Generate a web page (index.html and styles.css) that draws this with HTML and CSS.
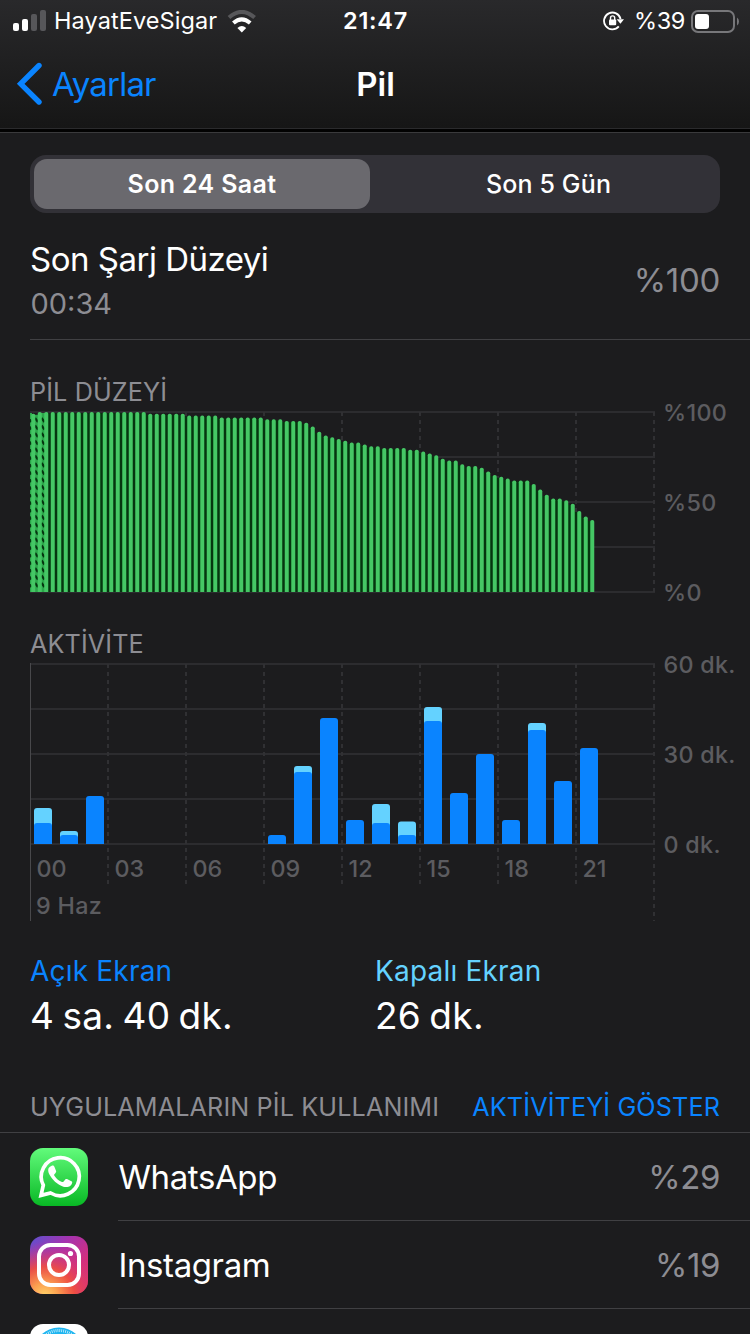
FILE: index.html
```html
<!DOCTYPE html>
<html lang="tr">
<head>
<meta charset="utf-8">
<title>Pil</title>
<link rel="stylesheet" href="styles.css">
</head>
<body>
<div class="screen">
  <header class="top">
    <div class="status">
      <div class="status-left">
        <svg class="signal" width="34" height="22" viewBox="0 0 34 22">
          <rect x="0" y="13" width="6" height="8" rx="2" fill="#fff"/>
          <rect x="9" y="9" width="6" height="12" rx="2" fill="#fff"/>
          <rect x="18" y="4" width="6" height="17" rx="2" fill="#57575a"/>
          <rect x="27" y="0" width="6" height="21" rx="2" fill="#57575a"/>
        </svg>
        <span class="carrier">HayatEveSigar</span>
        <svg class="wifi" width="30" height="23" viewBox="0 0 30 23" fill="none">
          <path d="M2 7.6Q14.7 -3.8 27.6 7.6" stroke="#57575a" stroke-width="4"/>
          <path d="M6.4 13Q14.7 5.6 23.2 13" stroke="#fff" stroke-width="4"/>
          <path d="M14.8 22.4L10.4 17.9Q14.8 13.9 19.2 17.9Z" fill="#fff"/>
        </svg>
      </div>
      <span class="clock">21:47</span>
      <div class="status-right">
        <svg class="lock" width="22" height="20" viewBox="0 0 22 20" fill="none">
          <path d="M15.8 15.4A8.4 8.4 0 1 1 17.6 8" stroke="#fff" stroke-width="1.8"/>
          <path d="M13.6 8.2H21L17.4 12.8Z" fill="#fff"/>
          <rect x="6" y="8.4" width="7.2" height="5.8" rx="1" fill="#fff"/>
          <path d="M7.5 9V7a2.1 2.1 0 0 1 4.2 0V9" stroke="#fff" stroke-width="1.4"/>
        </svg>
        <span class="percent">%39</span>
        <svg class="battery" width="48" height="23" viewBox="0 0 48 23">
          <rect x="1" y="1" width="42" height="21" rx="6" fill="none" stroke="#77777a" stroke-width="2"/>
          <rect x="4" y="4" width="14" height="15" rx="3" fill="#fff"/>
          <path d="M46 7.5Q48 9 48 11.5Q48 14 46 15.5Z" fill="#77777a"/>
        </svg>
      </div>
    </div>
    <nav class="nav">
      <div class="back">
        <svg width="26" height="44" viewBox="0 0 26 44"><path d="M23 3.5L4.700 21.8L23 40" fill="none" stroke="#0a84ff" stroke-width="5.4" stroke-linecap="round"/></svg>
        <span class="back-label">Ayarlar</span>
      </div>
      <h1 class="title">Pil</h1>
    </nav>
  </header>

  <main class="content">
    <div class="segments">
      <div class="segment segment-on"><span>Son 24 Saat</span></div>
      <div class="segment segment-off"><span>Son 5 Gün</span></div>
    </div>

    <section class="charge">
      <div>
        <div class="charge-title">Son Şarj Düzeyi</div>
        <div class="charge-time">00:34</div>
      </div>
      <div class="charge-value">%100</div>
    </section>

    <h2 class="heading level-heading">PİL DÜZEYİ</h2>
    <div class="chart">
      <svg id="level" class="level-plot" width="630" height="184" viewBox="0 0 630 184"></svg>
      <div class="scale"><span>%100</span><span>%50</span><span>%0</span></div>
    </div>

    <h2 class="heading activity-heading">AKTİVİTE</h2>
    <div class="chart chart-activity">
      <div>
        <svg id="activity" class="activity-plot" width="630" height="260" viewBox="0 0 630 260"></svg>
        <div class="hours"><span>00</span><span>03</span><span>06</span><span>09</span><span>12</span><span>15</span><span>18</span><span>21</span></div>
        <div class="date">9 Haz</div>
      </div>
      <div class="scale"><span>60 dk.</span><span>30 dk.</span><span>0 dk.</span></div>
    </div>

    <section class="totals">
      <div><div class="total-label on">Açık Ekran</div><div class="total-value">4 sa. 40 dk.</div></div>
      <div><div class="total-label off">Kapalı Ekran</div><div class="total-value">26 dk.</div></div>
    </section>

    <div class="apps-head">
      <h2 class="heading">UYGULAMALARIN PİL KULLANIMI</h2>
      <span class="heading show">AKTİVİTEYİ GÖSTER</span>
    </div>

    <div class="app">
      <svg class="app-icon" width="58" height="58" viewBox="0 0 58 58">
        <defs><linearGradient id="wa" x2="0" y2="1"><stop stop-color="#62fb7b"/><stop offset="1" stop-color="#08b824"/></linearGradient></defs>
        <rect width="58" height="58" rx="13" fill="url(#wa)"/>
        <path d="M11 47.400L13.3 37.2A19 19 0 1 1 20.6 45Z" fill="none" stroke="#fff" stroke-width="3.7" stroke-linejoin="miter"/>
        <path d="M22.2 19.2c1.300-.9 2.500-.3 3 .8l1.700 4.100c.3.900-.2 1.600-1.700 3.300-.5.600-.3 1 .2 1.800 1.900 3 4.400 4.800 7.400 6 .7.200 1.100.1 1.600-.5l1.700-2.100c.5-.6 1.100-.6 1.700-.3l4.400 2.100c.8.400.9.700.8 1.300-.4 3.400-3.600 4.800-6.200 4.600-3-.2-8.500-2.500-12.600-7.200-4.300-4.900-5.600-8-5.100-10.700.3-1.600 1.700-2.600 3.100-3.200z" transform="translate(-.8 -1.200)" fill="#fff"/>
      </svg>
      <div class="app-row"><span class="app-name">WhatsApp</span><span class="app-value">%29</span></div>
    </div>
    <div class="app">
      <svg class="app-icon" width="58" height="58" viewBox="0 0 58 58">
        <defs>
          <linearGradient id="ig1" x1="0" y1="0" x2="1" y2="1"><stop stop-color="#5b52d0"/><stop offset=".35" stop-color="#a533b0"/><stop offset=".7" stop-color="#d52e7a"/><stop offset="1" stop-color="#e23a63"/></linearGradient>
          <radialGradient id="ig2" cx=".25" cy="1.05" r=".95"><stop stop-color="#ffd76b"/><stop offset=".25" stop-color="#fca050"/><stop offset=".55" stop-color="#f0503e" stop-opacity=".9"/><stop offset="1" stop-color="#d02f8c" stop-opacity="0"/></radialGradient>
        </defs>
        <rect width="58" height="58" rx="13" fill="url(#ig1)"/>
        <rect width="58" height="58" rx="13" fill="url(#ig2)"/>
        <g fill="none" stroke="#fff" stroke-width="4"><rect x="9" y="9" width="40" height="40" rx="11.500"/><circle cx="29" cy="29" r="10"/></g>
        <circle cx="40.500" cy="17.500" r="2.600" fill="#fff"/>
      </svg>
      <div class="app-row"><span class="app-name">Instagram</span><span class="app-value">%19</span></div>
    </div>
    <div class="app">
      <svg class="app-icon" width="58" height="58" viewBox="0 0 58 58">
        <rect width="58" height="58" rx="13" fill="#fff"/>
        <circle cx="29" cy="29" r="25.500" fill="#1eb5f0"/>
        <circle cx="29" cy="29" r="22.500" fill="none" stroke="#e3f6ff" stroke-width="3" stroke-dasharray=".7 1.260"/>
      </svg>
      <div class="app-row"></div>
    </div>
  </main>
</div>
<script src="charts.js"></script>
</body>
</html>
```

FILE: styles.css
```css
* { box-sizing: border-box; margin: 0; padding: 0; }
body { background: #1c1c1e; color: #fff; font-family: Inter, "Liberation Sans", sans-serif; }
.screen { width: 750px; height: 1334px; overflow: hidden; background: #1c1c1e; }
svg { display: block; flex: none; }
span, .charge-title, .charge-time, .charge-value, .total-label, .total-value { white-space: nowrap; }

.top { height: 133px; background: linear-gradient(#29292b, #161616 128px); border-bottom: 1px solid #3a3a3c; box-shadow: inset 0 -3px 0 #020202, inset 0 -4px 0 #2b2b2d; }
.status { display: grid; grid-template-columns: 1fr auto 1fr; height: 40px; align-items: center; padding: 1px 12px 0 13px; font-size: 23.500px; line-height: 40px; }
.status-left, .status-right { display: flex; align-items: center; }
.status-right { justify-content: flex-end; }
.carrier { margin-left: 7px; letter-spacing: .08px; }
.wifi { margin-left: 10px; }
.clock { font-weight: 600; letter-spacing: .7px; }
.lock { margin-right: 9px; }
.percent { letter-spacing: -.4px; }
.battery { margin: 0 -1px 0 6px; }
.nav { display: grid; grid-template-columns: 1fr auto 1fr; align-items: center; height: 88px; padding: 0 15px 0 16px; font-size: 33px; }
.back { display: flex; align-items: center; gap: 10px; color: #0a84ff; letter-spacing: -.8px; }
.title { font-size: 33px; font-weight: 600; }

.content { padding-top: 22px; }
.segments { display: flex; height: 58px; margin: 0 30px; padding: 4px; border-radius: 16px; background: #323137; }
.segment { flex: 1; display: flex; align-items: center; justify-content: center; border-radius: 13px; font-size: 25px; font-weight: 500; }
.segment-on { flex: 0 0 336px; background: #6a696e; font-weight: 600; letter-spacing: .35px; }
.segment-off { padding-left: 11px; letter-spacing: .15px; }

.charge { display: flex; justify-content: space-between; align-items: center; height: 127px; margin-left: 30px; padding: 10px 30px 0 0; border-bottom: 1px solid #404043; }
.charge-title { font-size: 33px; line-height: 46px; letter-spacing: -.5px; }
.charge-time { padding-left: .5px; font-size: 29px; line-height: 44px; color: #8d8d93; }
.charge-value { margin-top: -2px; font-size: 33px; letter-spacing: -.3px; color: #8d8d93; }

.heading { font-size: 25.200px; font-weight: 400; line-height: 32px; letter-spacing: .12px; color: #8d8d93; }
.level-heading { margin: 36px 0 0 30px; }
.activity-heading { margin: 29px 0 0 30px; }
.chart { display: flex; height: 188px; margin: 3px 0 0 30px; }
.level-plot { margin-bottom: -100px; }
.scale { display: flex; flex-direction: column; gap: 60px; margin: -13px 0 0 3px; font-size: 23.300px; font-weight: 500; line-height: 30px; letter-spacing: .3px; color: #5c5c60; }
.chart-activity { height: 262px; }
.activity-plot { margin-bottom: -69px; }
.hours { display: grid; grid-template-columns: repeat(8, 78px); padding-left: 6.500px; font-size: 23.300px; font-weight: 500; line-height: 30px; color: #5c5c60; }
.date { padding: 7px 0 0 6px; font-size: 23.300px; font-weight: 500; line-height: 30px; letter-spacing: .3px; color: #5c5c60; }

.totals { display: grid; grid-template-columns: 345px 1fr; margin: 27px 0 0 30px; }
.total-label { font-size: 28px; line-height: 38px; letter-spacing: .2px; }
.on { color: #0a84ff; }
.off { color: #64d2ff; }
.total-value { font-size: 37px; line-height: 52px; letter-spacing: .3px; word-spacing: -2.500px; }

.apps-head { display: flex; justify-content: space-between; margin-top: 49px; padding: 0 30px 9px; border-bottom: 1px solid #404043; }
.show { color: #0a84ff; }
.app { display: flex; height: 88px; padding-left: 30px; }
.app-icon { margin-top: 15px; }
.app-row { display: flex; flex: 1; justify-content: space-between; align-items: center; margin-left: 30px; padding-right: 30px; border-bottom: 1px solid #404043; font-size: 33px; letter-spacing: -.4px; }
.app-name { padding-left: .5px; }
.app-value { color: #8d8d93; }

.grid-line { stroke: #2c2c2f; stroke-width: 2; }
.grid-dash { stroke: #303033; stroke-width: 2; stroke-dasharray: 4 4; }
.day-line { stroke: #48484b; stroke-width: 1; }
.bar-level { fill: #45c765; }
.gap-level { fill: #05350f; }
.gap-charging { fill: #2ba64a; }
.hatch { stroke: #05350f; stroke-width: 2.200; }
.bar-on { fill: #0a84ff; }
.bar-off { fill: #64d2ff; }
```

FILE: charts.js
```js
const levels = [
  99,100,100,100,100,100,100,100,100,100,100,100,100,100,100,100,100,100,
  99,99,99,99,99,99,98,98,98,98,98,97,97,97,97,97,97,97,96,96,96,95,95,95,
  94,92,89,87,86,85,84,83,83,82,81,81,80,80,80,80,79,79,78,77,76,74,73,73,
  71,70,70,69,67,65,64,63,62,62,62,60,57,54,52,52,51,49,45,42,40
];

// [hour, screen-on height, total height]
const activity = [
  [0,21,36],[1,9,13],[2,48,48],[9,9,9],[10,72,78],[11,126,126],[12,24,24],
  [13,21,40],[14,9,22.500],[15,123,137],[16,51,51],[17,90,90],[18,24,24],
  [19,114,121],[20,63,63],[21,96,96]
];

function grid(dashEnd, lastEnd) {
  let s = "";
  for (let i = 0; i <= 4; i++) s += `<path class="grid-line" d="M0 ${1 + i * 45}H625"/>`;
  for (let i = 1; i <= 8; i++) s += `<path class="grid-dash" d="M${i * 78} 1V${i === 8 ? lastEnd : dashEnd}"/>`;
  return s;
}

function topRound(cls, x, w, h, r) {
  const y = 181 - h;
  return `<path class="${cls}" d="M${x} 181V${y + r}q0 ${-r} ${r} ${-r}h${w - 2 * r}q${r} 0 ${r} ${r}V181Z"/>`;
}

let level = grid(181, 181);
level += '<rect class="gap-charging" x="0" y="2" width="2" height="179"/>';
levels.forEach((v, i) => {
  const x = 1.25 + i * 6.5;
  if (i < levels.length - 1) {
    const h = Math.min(v, levels[i + 1]) * 1.8 - 1;
    const cls = i < 2 ? "gap-charging" : "gap-level";
    level += `<rect class="${cls}" x="${x + 3}" y="${181 - h}" width="4.500" height="${h}"/>`;
  }
});
// Diagonal stripes mark the time on the charger.
for (const x of [-1.5, 5, 11.5]) {
  for (let y = 9; y < 179; y += 7.5) level += `<path class="hatch" d="M${x} ${y - 2}l3 4"/>`;
}
levels.forEach((v, i) => { level += topRound("bar-level", 1.25 + i * 6.5, 4, v * 1.8, 1.8); });
document.getElementById("level").innerHTML = level;

let act = grid(225, 258) + '<path class="day-line" d="M.5 0V258"/>';
for (const [hour, on, total] of activity) {
  const x = 4 + hour * 26;
  if (total > on) act += topRound("bar-off", x, 18, total, 3);
  act += topRound("bar-on", x, 18, on, 3);
}
document.getElementById("activity").innerHTML = act;
```
